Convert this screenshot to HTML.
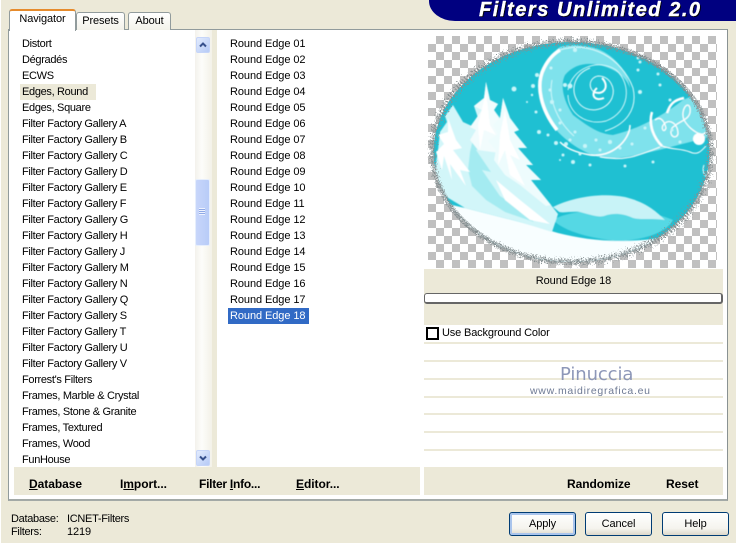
<!DOCTYPE html>
<html><head><meta charset="utf-8">
<style>
html,body{margin:0;padding:0}
body{width:736px;height:543px;position:relative;overflow:hidden;background:#ece9d8;font-family:"Liberation Sans",sans-serif;font-size:11px;color:#000;letter-spacing:-.1px}
div{position:absolute;box-sizing:border-box}
.it{left:0;height:16px;line-height:16px;white-space:nowrap}
.b{font-weight:bold;font-size:12px;top:477px;line-height:14px;white-space:nowrap;letter-spacing:-.05px}
.btn{top:512px;height:24px;width:67px;border:1px solid #003c74;border-radius:3px;background:linear-gradient(#fff,#f5f4ee 70%,#dcd8ca);text-align:center;line-height:22px}
.ln{left:424px;width:299px;height:2px;background:#ece9d8}
.tab{border:1px solid #919b9c;border-bottom:0;border-radius:3px 3px 0 0;background:linear-gradient(#fff,#f3f2ea);text-align:center}
.sb{left:196px;width:14px;height:16px;border-radius:2px;background:linear-gradient(135deg,#e2ebfd,#b6caf6);border:1px solid #c6d5f8}
</style></head><body>
<div style="left:0;top:0;width:1px;height:543px;background:#fff"></div>
<!-- tab panel -->
<div style="left:8px;top:29px;width:720px;height:472px;background:#fff;border:1px solid #919b9c;border-right-color:#8a9293;border-bottom:2px solid #a3a9a6"></div>
<div class="tab" style="left:76px;top:12px;width:49px;height:18px;line-height:17px">Presets</div>
<div class="tab" style="left:128px;top:12px;width:43px;height:18px;line-height:17px">About</div>
<div style="left:9px;top:9px;width:67px;height:22px;background:#fff;border:1px solid #919b9c;border-top:2px solid #e68b2c;border-bottom:0;border-radius:3px 3px 0 0;text-align:center;line-height:17px">Navigator</div>

<!-- banner -->
<div style="left:429px;top:0;width:307px;height:21px;background:#000080;border-bottom-left-radius:26px 20px"></div>
<div style="left:479px;top:0;height:22px;line-height:21px;color:#fff;font-weight:bold;font-style:italic;font-size:20px;letter-spacing:1.55px;white-space:nowrap;text-shadow:1px 1px 0 #000;-webkit-text-stroke:.4px #fff">Filters Unlimited 2.0</div>

<!-- scrollbar -->
<div style="left:195px;top:30px;width:17px;height:437px;background:linear-gradient(90deg,#f3f1ec,#fdfdfa 40%,#f3f1e8)"></div>
<div style="left:212px;top:30px;width:5px;height:437px;background:#ece9d8"></div>
<div class="sb" style="top:37px"><svg width="12" height="14" style="position:absolute;left:0;top:0"><path d="M3 8.500L6 5.500L9 8.500" fill="none" stroke="#36508c" stroke-width="2"/></svg></div>
<div class="sb" style="top:450px"><svg width="12" height="14" style="position:absolute;left:0;top:0"><path d="M3 5.500L6 8.500L9 5.500" fill="none" stroke="#36508c" stroke-width="2"/></svg></div>
<div style="left:195px;top:179px;width:15px;height:67px;border:1px solid #e6eefc;border-radius:2px;background:linear-gradient(90deg,#c8d6fa,#b8ccf8)"></div>
<div style="left:199px;top:208px;width:6px;height:7px;background:repeating-linear-gradient(#eef2fe 0 1px,#8fa9e6 1px 2px)"></div>

<!-- list 1 -->
<div style="left:20px;top:84px;width:76px;height:16px;background:#ece9d8"></div>
<div style="left:22px;top:36px;width:170px;height:432px;overflow:hidden;letter-spacing:-.32px">
<div class="it" style="top:0">Distort</div>
<div class="it" style="top:16px">Dégradés</div>
<div class="it" style="top:32px">ECWS</div>
<div class="it" style="top:48px">Edges, Round</div>
<div class="it" style="top:64px">Edges, Square</div>
<div class="it" style="top:80px">Filter Factory Gallery A</div>
<div class="it" style="top:96px">Filter Factory Gallery B</div>
<div class="it" style="top:112px">Filter Factory Gallery C</div>
<div class="it" style="top:128px">Filter Factory Gallery D</div>
<div class="it" style="top:144px">Filter Factory Gallery E</div>
<div class="it" style="top:160px">Filter Factory Gallery F</div>
<div class="it" style="top:176px">Filter Factory Gallery G</div>
<div class="it" style="top:192px">Filter Factory Gallery H</div>
<div class="it" style="top:208px">Filter Factory Gallery J</div>
<div class="it" style="top:224px">Filter Factory Gallery M</div>
<div class="it" style="top:240px">Filter Factory Gallery N</div>
<div class="it" style="top:256px">Filter Factory Gallery Q</div>
<div class="it" style="top:272px">Filter Factory Gallery S</div>
<div class="it" style="top:288px">Filter Factory Gallery T</div>
<div class="it" style="top:304px">Filter Factory Gallery U</div>
<div class="it" style="top:320px">Filter Factory Gallery V</div>
<div class="it" style="top:336px">Forrest's Filters</div>
<div class="it" style="top:352px">Frames, Marble &amp; Crystal</div>
<div class="it" style="top:368px">Frames, Stone &amp; Granite</div>
<div class="it" style="top:384px">Frames, Textured</div>
<div class="it" style="top:400px">Frames, Wood</div>
<div class="it" style="top:416px">FunHouse</div>
</div>

<!-- list 2 -->
<div style="left:228px;top:308px;width:81px;height:16px;background:#316ac5"></div>
<div style="left:230px;top:36px;width:100px;height:300px;letter-spacing:-.08px">
<div class="it" style="top:0">Round Edge 01</div>
<div class="it" style="top:16px">Round Edge 02</div>
<div class="it" style="top:32px">Round Edge 03</div>
<div class="it" style="top:48px">Round Edge 04</div>
<div class="it" style="top:64px">Round Edge 05</div>
<div class="it" style="top:80px">Round Edge 06</div>
<div class="it" style="top:96px">Round Edge 07</div>
<div class="it" style="top:112px">Round Edge 08</div>
<div class="it" style="top:128px">Round Edge 09</div>
<div class="it" style="top:144px">Round Edge 10</div>
<div class="it" style="top:160px">Round Edge 11</div>
<div class="it" style="top:176px">Round Edge 12</div>
<div class="it" style="top:192px">Round Edge 13</div>
<div class="it" style="top:208px">Round Edge 14</div>
<div class="it" style="top:224px">Round Edge 15</div>
<div class="it" style="top:240px">Round Edge 16</div>
<div class="it" style="top:256px">Round Edge 17</div>
<div class="it" style="top:272px;color:#fff">Round Edge 18</div>
</div>

<!-- preview -->
<svg width="736" height="543" style="position:absolute;left:0;top:0">
<defs>
<pattern id="ck" x="428" y="36" width="16" height="16" patternUnits="userSpaceOnUse"><rect width="16" height="16" fill="#fff"/><rect x="8" width="8" height="8" fill="#c0c0c0"/><rect y="8" width="8" height="8" fill="#c0c0c0"/></pattern>
<clipPath id="ov"><ellipse cx="571.500" cy="152" rx="138" ry="110"/></clipPath>
<filter id="rg" x="-10%" y="-10%" width="120%" height="120%"><feTurbulence type="fractalNoise" baseFrequency="0.7" numOctaves="2" seed="4"/><feDisplacementMap in="SourceGraphic" scale="13"/></filter>
<filter id="sf"><feGaussianBlur stdDeviation=".55"/></filter>
</defs>
<rect x="428" y="36" width="289" height="232" fill="url(#ck)"/>
<g clip-path="url(#ov)">
<rect x="428" y="36" width="289" height="232" fill="#1fc0d2"/>
<g filter="url(#sf)">
<!-- swirl band -->
<path d="M560 47C543 60 535 85 542 105C548 128 575 152 603 158C625 160 660 150 720 134L720 84L683 100C660 118 635 130 613 135C600 134 590 128 573 115C563 100 560 85 565 75C575 63 590 62 603 66C615 70 625 75 630 88C628 70 610 50 590 47C580 45 570 44 560 47Z" fill="#7fe2ec"/>
<g fill="none" stroke="#fff">
<path d="M557 130C541 110 535 85 544 68C548 60 553 54 560 50" stroke-width="3.500"/>
<path d="M552 80C548 100 558 122 574 136" stroke-width="1" stroke="#c9f6fa"/>
<path d="M560 50C590 40 622 58 633 88C638 110 625 125 605 131" stroke-width="1" stroke="#d8fafc"/>
<path d="M568 90C572 68 598 58 616 70C632 84 630 112 606 121C585 126 568 112 568 95" stroke-width=".9" stroke="#d8fafc"/>
<path d="M596 93C588 90 588 78 598 76C610 76 616 88 612 98C606 112 586 114 578 102C570 90 574 74 590 68" stroke-width="1" stroke="#e4fbfd"/>
<path d="M594 92C604 96 610 86 602 78M597 88C590 94 594 102 604 98" stroke-width="2"/>
<path d="M630 125C630 140 612 158 590 155C574 152 566 148 560 142" stroke-width="1.500"/>
<path d="M652 112C648 125 654 138 662 146" stroke-width="2.500"/>
<path d="M667 113C670 104 674 100 684 98" stroke-width="2.500"/>
<path d="M655 120C660 116 664 120 666 128C664 134 660 128 664 124C670 118 678 124 678 134C676 140 668 136 672 128C680 120 692 120 690 108C688 100 680 110 684 120C690 130 702 138 706 132" stroke-width="1.200"/>
<path d="M662 146C672 150 680 148 690 152C698 156 702 150 706 146M704 165C702 170 704 178 708 176" stroke-width="1"/>
<path d="M600 157C625 162 640 155 660 147" stroke-width="1"/>
</g>
<circle cx="699" cy="139" r="6" fill="#fff"/>
<g fill="#c8f5f9">
<circle cx="514" cy="89" r="2.500"/><circle cx="532" cy="95" r="1.200"/><circle cx="536" cy="112" r="1.500"/><circle cx="539" cy="132" r="2"/><circle cx="560" cy="123" r="1.500"/><circle cx="548" cy="135" r="1.500"/><circle cx="556" cy="143" r="2"/><circle cx="566" cy="144" r="2"/><circle cx="573" cy="162" r="2"/><circle cx="563" cy="155" r="1.500"/><circle cx="570" cy="140" r="1.500"/><circle cx="580" cy="154" r="1.500"/><circle cx="590" cy="165" r="1.500"/><circle cx="585" cy="146" r="2"/><circle cx="600" cy="150" r="1.500"/><circle cx="653" cy="162" r="1.500"/><circle cx="625" cy="166" r="1.500"/><circle cx="537" cy="75" r="2"/><circle cx="533" cy="86" r="2"/><circle cx="527" cy="102" r="1"/><circle cx="560" cy="160" r="1"/><circle cx="610" cy="142" r="2"/><circle cx="632" cy="144" r="1.500"/><circle cx="645" cy="128" r="1.500"/><circle cx="660" cy="85" r="1.500"/><circle cx="640" cy="62" r="1.500"/><circle cx="627" cy="50" r="1.500"/><circle cx="638" cy="58" r="1.500"/><circle cx="658" cy="74" r="1.500"/><circle cx="670" cy="100" r="1.500"/><circle cx="575" cy="50" r="2"/><circle cx="565" cy="85" r="2"/><circle cx="552" cy="102" r="2"/><circle cx="560" cy="110" r="1.500"/><circle cx="570" cy="86" r="2.500"/><circle cx="640" cy="92" r="2"/><circle cx="638" cy="70" r="1.500"/><circle cx="550" cy="90" r="1.500"/><circle cx="551" cy="68" r="1.500"/><circle cx="575" cy="132" r="1.500"/><circle cx="596" cy="140" r="1.500"/><circle cx="620" cy="148" r="1.500"/><circle cx="672" cy="130" r="1.500"/><circle cx="680" cy="142" r="1.500"/>
</g>
<!-- snow -->
<path d="M430 200L465 208L520 222L558 233C585 240 620 244 660 238L690 230L690 270L430 270Z" fill="#f8feff"/>
<path d="M553 220C570 208 640 205 673 220C668 230 650 240 617 241C590 238 565 232 553 220Z" fill="#55d8e4"/>
<path d="M553 207C570 198 600 192 625 197C645 202 655 210 665 220C650 218 640 220 633 218C620 212 612 214 607 215C600 218 595 216 580 212C570 211 560 214 558 211Z" fill="#c8f3f7"/>
<!-- light tree mass -->
<path d="M432 190L438 150L440 132L447 122L445 116L453 105L463 122L474 127L478 118L474 106L484 98L486 82L490 100L498 104L494 110L500 118L503 98L510 118L519 130L514 132L527 148L518 148L533 165L526 165L541 180L531 180L551 205L558 214L552 232L520 222L465 208L445 196Z" fill="#d2f6f9"/>
<path d="M474 135L482 148L476 150L491 172L482 170L500 196L522 210L534 222L505 212L486 200L472 186L468 170L470 152Z" fill="#a4ebf1"/>
<path d="M486 82L490 100L498 104L494 110L503 125L497 126L506 141L500 153L478 150L470 140L476 130L470 127L482 110L474 106L484 98Z" fill="#f2fcfd"/>
<path d="M503 98L510 118L519 130L514 132L527 148L518 148L533 165L526 165L541 180L531 180L551 205L546 206L520 185L505 175L494 160L496 150L488 141L498 134L493 125L500 118Z" fill="#eefcfd"/>
<path d="M448 118L456 140L462 148L453 150L470 172L460 170L466 186L450 164L452 180L444 156L442 170L436 152L444 144L438 135L448 132ZM505 110L510 140L520 160L510 155L525 186L510 175L505 150L498 165L500 135ZM486 92L490 125L496 135L484 130L480 150L478 125ZM496 180L520 200L550 224L530 220L505 200Z" fill="#fff"/>
</g>
</g>
<ellipse cx="571.500" cy="152" rx="139" ry="110" fill="none" stroke="#858f91" stroke-width="5" stroke-dasharray="2 1" filter="url(#rg)"/>
</svg>

<!-- right panel -->
<div style="left:424px;top:269px;width:299px;height:56px;background:#ece9d8"></div>
<div style="left:424px;top:274px;width:299px;text-align:center;line-height:14px;letter-spacing:-.08px">Round Edge 18</div>
<div style="left:424px;top:293px;width:299px;height:11px;background:#fff;border:1px solid #666;border-width:1px 2px 2px 1px;border-radius:3px"></div>
<div style="left:426px;top:327px;width:13px;height:13px;border:2px solid #000;background:#fff"></div>
<div style="left:442px;top:326px;line-height:14px;white-space:nowrap;letter-spacing:-.15px">Use Background Color</div>
<div class="ln" style="top:342px"></div>
<div class="ln" style="top:360px"></div>
<div class="ln" style="top:378px"></div>
<div class="ln" style="top:396px"></div>
<div class="ln" style="top:413px"></div>
<div class="ln" style="top:431px"></div>
<div class="ln" style="top:449px"></div>
<div style="left:560px;top:364px;line-height:22px;font-size:18px;letter-spacing:-.1px;color:#8d97b8;font-family:'DejaVu Sans',sans-serif;white-space:nowrap">Pinuccia</div>
<div style="left:530px;top:385px;line-height:12px;font-size:10.500px;letter-spacing:.72px;color:#6e7a94;white-space:nowrap">www.maidiregrafica.eu</div>

<!-- bottom strip -->
<div style="left:14px;top:467px;width:406px;height:28px;background:#ece9d8"></div>
<div style="left:424px;top:467px;width:299px;height:28px;background:#ece9d8"></div>
<div class="b" style="left:29px"><u>D</u>atabase</div>
<div class="b" style="left:120px">I<u>m</u>port...</div>
<div class="b" style="left:199px;letter-spacing:-.25px">Filter <u>I</u>nfo...</div>
<div class="b" style="left:296px"><u>E</u>ditor...</div>
<div class="b" style="left:567px">Randomize</div>
<div class="b" style="left:666px">Reset</div>

<!-- status -->
<div style="left:11px;top:512px;line-height:14px;white-space:nowrap;letter-spacing:-.3px">Database:</div>
<div style="left:67px;top:512px;line-height:14px;white-space:nowrap;letter-spacing:-.3px">ICNET-Filters</div>
<div style="left:11px;top:525px;line-height:14px;white-space:nowrap;letter-spacing:-.3px">Filters:</div>
<div style="left:67px;top:525px;line-height:14px;white-space:nowrap">1219</div>

<!-- buttons -->
<div class="btn" style="left:509px;box-shadow:inset 0 0 0 2px #a9c4ec">Apply</div>
<div class="btn" style="left:585px">Cancel</div>
<div class="btn" style="left:662px">Help</div>
</body></html>
